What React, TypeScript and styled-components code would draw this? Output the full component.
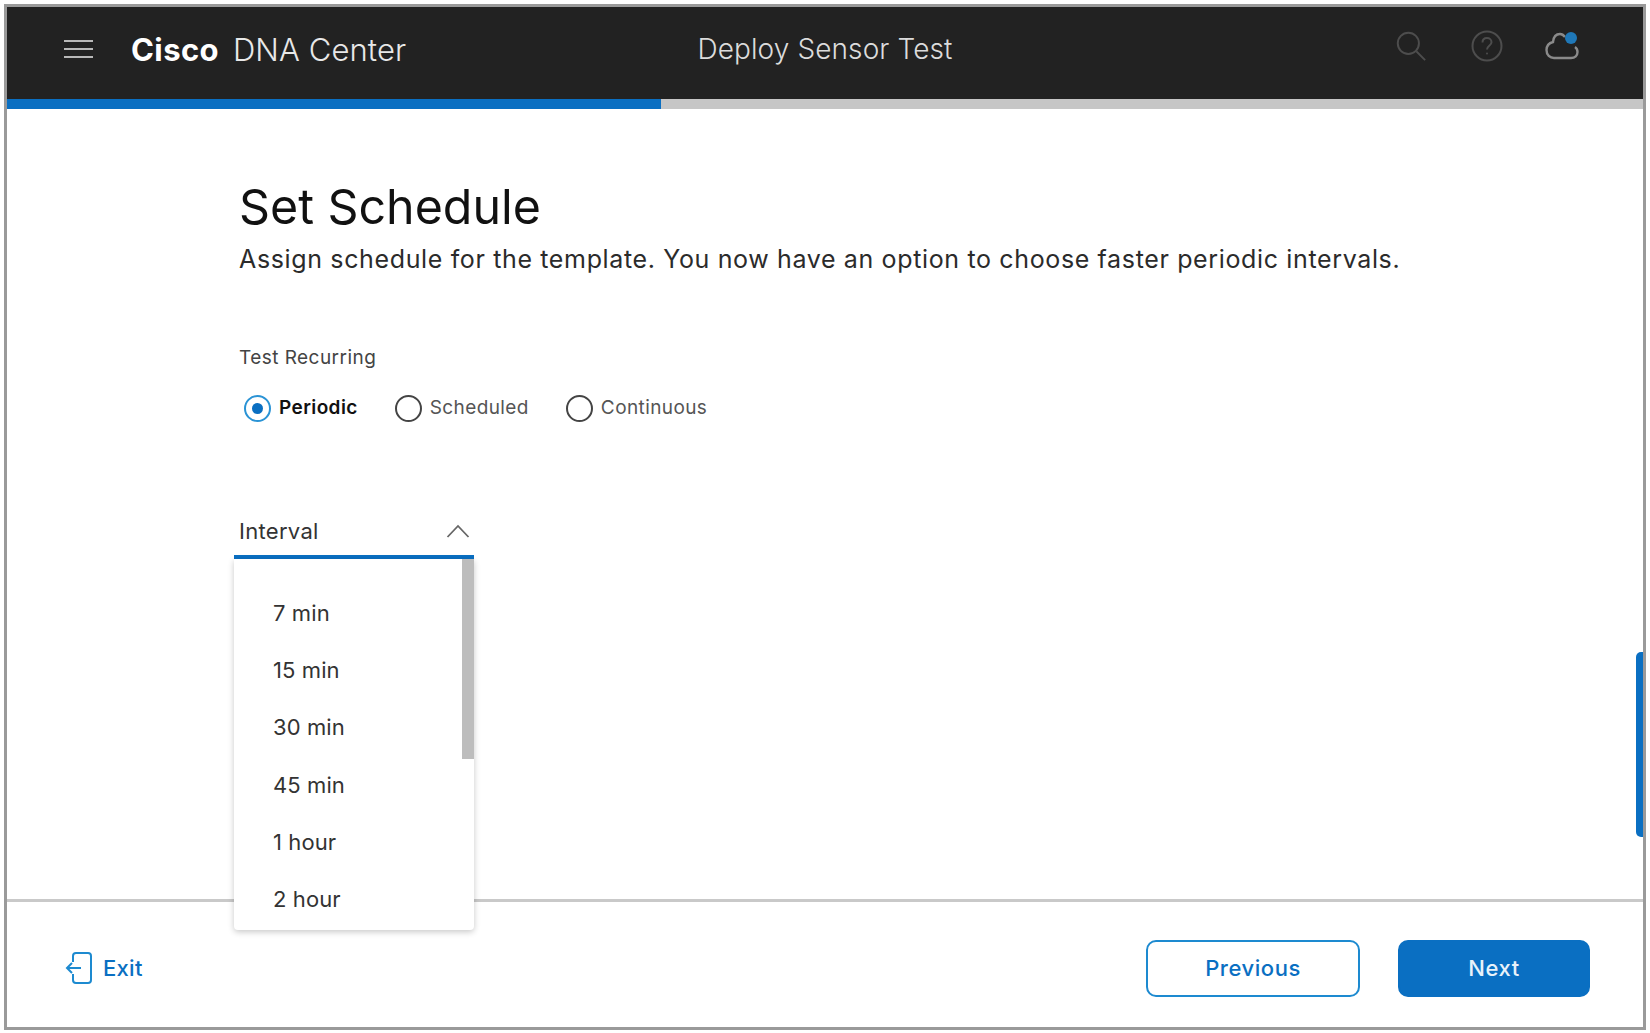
import React from 'react';
import styled, { createGlobalStyle } from 'styled-components';

const BLUE = '#0a6fc2';

const GlobalStyle = createGlobalStyle`
    html, body {
        margin: 0;
        padding: 0;
        background: #fff;
    }
    body {
        font-family: Inter, "Liberation Sans", sans-serif;
        color: #222;
    }
`;

const Frame = styled.div`
    position: relative;
    box-sizing: border-box;
    margin: 4px 4px 0;
    width: 1642px;
    height: 1026px;
    border: 3px solid #9a9a9a;
    display: flex;
    flex-direction: column;
    background: #fff;
`;

const Header = styled.header`
    box-sizing: border-box;
    height: 92px;
    padding-bottom: 8px;
    flex: none;
    background: #222222;
    display: grid;
    grid-template-columns: 1fr auto 1fr;
    align-items: center;
    color: #fff;
`;

const Brand = styled.div`
    display: flex;
    align-items: center;
    padding-left: 57px;
`;

const Burger = styled.div`
    width: 29px;
    height: 18px;
    margin-right: 38px;
    display: flex;
    flex-direction: column;
    justify-content: space-between;
    span {
        display: block;
        height: 2px;
        background: #b9b9b9;
    }
`;

const BrandName = styled.span`
    font-size: 31px;
    font-weight: 700;
    letter-spacing: 0.4px;
    margin-right: 14px;
`;

const BrandProduct = styled.span`
    font-size: 31px;
    font-weight: 300;
    letter-spacing: 0.1px;
    color: #e8e8e8;
`;

const PageName = styled.div`
    font-size: 28px;
    font-weight: 300;
    letter-spacing: 0.1px;
    color: #dcdcdc;
`;

const HeaderIcons = styled.div`
    display: flex;
    justify-content: flex-end;
    align-items: center;
    gap: 42px;
    padding-right: 64px;
    margin-top: -6px;
    svg:first-child {
        margin-right: 3px;
    }
`;

const Progress = styled.div`
    height: 10px;
    flex: none;
    background: #c6c6c6;
`;

const ProgressFill = styled.div<{ $pct: number }>`
    height: 100%;
    width: ${(p) => p.$pct}%;
    background: ${BLUE};
`;

const Content = styled.main`
    flex: 1;
    padding: 67px 0 0 232px;
`;

const Title = styled.h1`
    margin: 0;
    font-size: 48.3px;
    line-height: 62px;
    font-weight: 400;
    color: #111;
`;

const Subtitle = styled.p`
    margin: 5px 0 0;
    font-size: 25px;
    line-height: 32px;
    letter-spacing: 0.64px;
    color: #2b2b2b;
`;

const FieldLabel = styled.div`
    margin-top: 71px;
    font-size: 19px;
    line-height: 24px;
    letter-spacing: 0.45px;
    color: #444;
`;

const RadioRow = styled.div`
    display: flex;
    margin-top: 24px;
    padding-left: 5px;
    gap: 37px;
`;

const RadioItem = styled.label<{ $checked?: boolean }>`
    display: flex;
    align-items: center;
    gap: 8px;
    font-size: 19px;
    line-height: 28px;
    letter-spacing: 0.4px;
    font-weight: ${(p) => (p.$checked ? 600 : 400)};
    color: ${(p) => (p.$checked ? '#111' : '#555')};
`;

const RadioCircle = styled.span<{ $checked?: boolean }>`
    box-sizing: border-box;
    width: 27px;
    height: 27px;
    border-radius: 50%;
    border: 2.5px solid ${(p) => (p.$checked ? '#2a93d5' : '#444')};
    display: flex;
    align-items: center;
    justify-content: center;
    &::after {
        content: '';
        display: ${(p) => (p.$checked ? 'block' : 'none')};
        width: 11px;
        height: 11px;
        border-radius: 50%;
        background: ${BLUE};
    }
`;

const Select = styled.div`
    position: relative;
    width: 240px;
    margin: 89px 0 0 -5px;
`;

const SelectHead = styled.div`
    box-sizing: border-box;
    height: 48px;
    padding: 0 4px 4px 5px;
    border-bottom: 4px solid ${BLUE};
    display: flex;
    align-items: center;
    justify-content: space-between;
    font-size: 22px;
    letter-spacing: 0.3px;
    color: #333;
`;

const Menu = styled.div`
    position: absolute;
    z-index: 2;
    top: 48px;
    left: 0;
    right: 0;
    height: 371px;
    padding-top: 25px;
    box-sizing: border-box;
    background: #fff;
    border-radius: 0 0 4px 4px;
    box-shadow: 0 2px 6px rgba(0, 0, 0, 0.22);
`;

const MenuItem = styled.div`
    height: 57.3px;
    padding-left: 39px;
    display: flex;
    align-items: center;
    font-size: 22px;
    letter-spacing: 0.1px;
    color: #333;
`;

const MenuThumb = styled.div`
    position: absolute;
    top: 0;
    right: 0;
    width: 12px;
    height: 200px;
    background: #bdbdbd;
`;

const Footer = styled.footer`
    height: 128px;
    flex: none;
    box-sizing: border-box;
    border-top: 3px solid #c9c9c9;
    display: flex;
    align-items: center;
    justify-content: space-between;
    padding: 7px 53px 0 58px;
`;

const ExitLink = styled.a`
    display: flex;
    align-items: center;
    gap: 10px;
    font-size: 22px;
    font-weight: 500;
    letter-spacing: 0.3px;
    color: ${BLUE};
`;

const Buttons = styled.div`
    display: flex;
    gap: 38px;
`;

const Button = styled.button<{ $primary?: boolean }>`
    box-sizing: border-box;
    width: ${(p) => (p.$primary ? 192 : 214)}px;
    height: 57px;
    border-radius: 10px;
    border: 2.5px solid ${(p) => (p.$primary ? BLUE : '#1d8ad0')};
    background: ${(p) => (p.$primary ? BLUE : '#fff')};
    color: ${(p) => (p.$primary ? '#e8f2fa' : BLUE)};
    font-family: inherit;
    font-size: 22px;
    font-weight: 500;
    letter-spacing: 0.55px;
`;

const SideTab = styled.div`
    position: absolute;
    right: 0;
    top: 645px;
    width: 7px;
    height: 185px;
    background: ${BLUE};
    border-radius: 5px 0 0 5px;
`;

const intervals = ['7 min', '15 min', '30 min', '45 min', '1 hour', '2 hour'];

export default function App() {
    return (
        <>
            <GlobalStyle />
            <Frame>
                <Header>
                    <Brand>
                        <Burger>
                            <span />
                            <span />
                            <span />
                        </Burger>
                        <BrandName>Cisco</BrandName>
                        <BrandProduct>DNA Center</BrandProduct>
                    </Brand>
                    <PageName>Deploy Sensor Test</PageName>
                    <HeaderIcons>
                        <svg width="30" height="30" viewBox="0 0 34 34" fill="none" stroke="#4d4d4d" strokeWidth="2.200">
                            <circle cx="14" cy="14" r="12" />
                            <path d="M23 23l10 10" />
                        </svg>
                        <svg width="32" height="32" viewBox="0 0 32 32" fill="none" stroke="#4d4d4d" strokeWidth="2">
                            <circle cx="16" cy="16" r="14.5" />
                            <path d="M11.5 12.5c0-3 2-4.5 4.500-4.500s4.500 1.700 4.500 4.200c0 3.600-4.500 3.600-4.500 7.300" />
                            <circle cx="16" cy="23.5" r="1" fill="#4d4d4d" stroke="none" />
                        </svg>
                        <svg width="34" height="30" viewBox="0 0 34 30" fill="none">
                            <path
                                d="M9 27h17c4 0 6.500-2.500 6.500-6 0-2.500-1-4-2.500-5M20 6c-1.500-2-3-3-5-3-4 0-6.500 3-7 8-3.500 1-6.500 3.500-6.500 8 0 5 3.500 8 7.500 8"
                                stroke="#8a8a8a"
                                strokeWidth="2.400"
                            />
                            <circle cx="26" cy="7" r="6" fill="#1f78b8" />
                        </svg>
                    </HeaderIcons>
                </Header>
                <Progress>
                    <ProgressFill $pct={40} />
                </Progress>
                <Content>
                    <Title>Set Schedule</Title>
                    <Subtitle>
                        Assign schedule for the template. You now have an option to choose faster periodic intervals.
                    </Subtitle>
                    <FieldLabel>Test Recurring</FieldLabel>
                    <RadioRow>
                        <RadioItem $checked>
                            <RadioCircle $checked />
                            Periodic
                        </RadioItem>
                        <RadioItem>
                            <RadioCircle />
                            Scheduled
                        </RadioItem>
                        <RadioItem>
                            <RadioCircle />
                            Continuous
                        </RadioItem>
                    </RadioRow>
                    <Select>
                        <SelectHead>
                            Interval
                            <svg width="24" height="14" viewBox="0 0 24 14" fill="none" stroke="#666" strokeWidth="1.800">
                                <path d="M1.500 13L12 2l10.500 11" />
                            </svg>
                        </SelectHead>
                        <Menu>
                            <MenuThumb />
                            {intervals.map((label) => (
                                <MenuItem key={label}>{label}</MenuItem>
                            ))}
                        </Menu>
                    </Select>
                </Content>
                <Footer>
                    <ExitLink>
                        <svg width="28" height="32" viewBox="0 0 28 32" fill="none" stroke="#1d8ad0" strokeWidth="2">
                            <path d="M8 10V4a3 3 0 0 1 3-3h12a3 3 0 0 1 3 3v24a3 3 0 0 1-3 3H11a3 3 0 0 1-3-3v-6" />
                            <path d="M16 16H2M7 11l-5 5 5 5" />
                        </svg>
                        Exit
                    </ExitLink>
                    <Buttons>
                        <Button>Previous</Button>
                        <Button $primary>Next</Button>
                    </Buttons>
                </Footer>
                <SideTab />
            </Frame>
        </>
    );
}
